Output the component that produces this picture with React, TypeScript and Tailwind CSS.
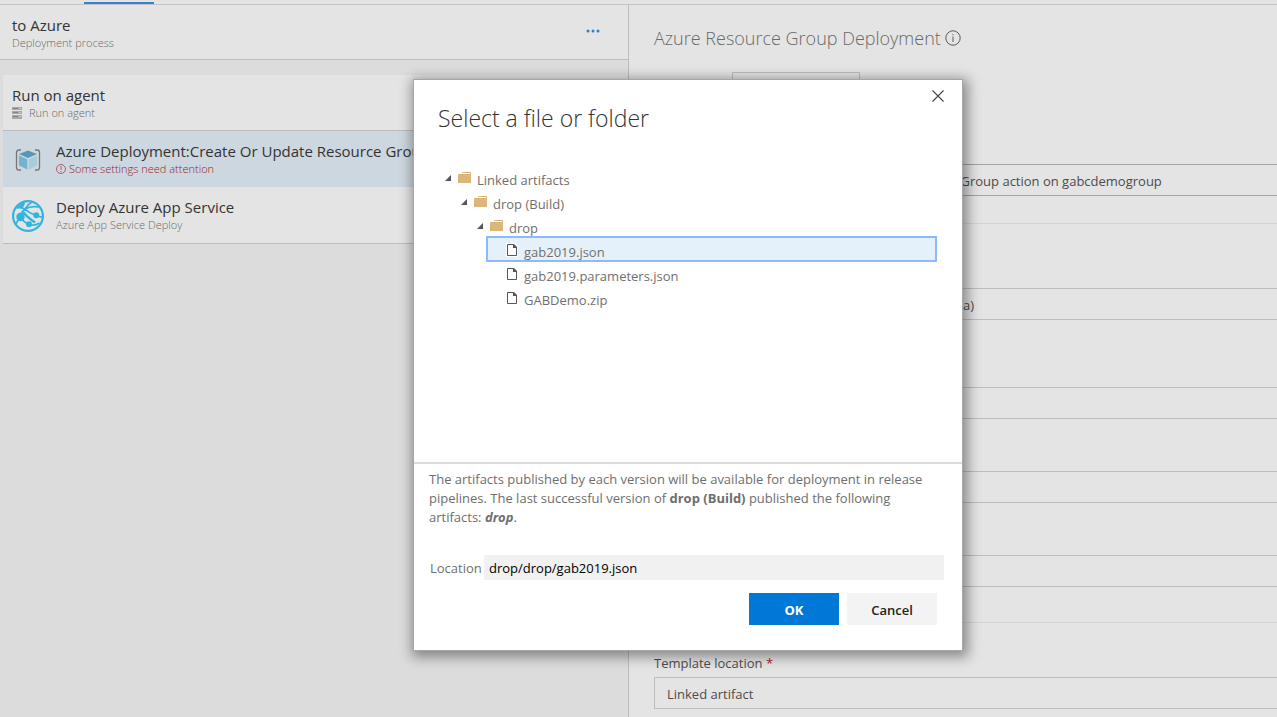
import type { ReactNode } from "react";

const FONT = "font-['Open_Sans','Noto_Sans',sans-serif]";

function FolderIcon() {
  return (
    <svg width="13" height="12" viewBox="0 0 13 12" className="mt-0.5 shrink-0" aria-hidden="true">
      <path d="M0 2h4l1-2h8v11H0z" fill="#dcb67a" />
      <path d="M5 1h7v1H4.500z" fill="#fff" />
    </svg>
  );
}

function FileIcon() {
  return (
    <svg width="12" height="14" viewBox="0 0 12 14" className="mt-0.5 shrink-0" aria-hidden="true">
      <path d="M0 0h8.500l3 3v11H0z" fill="#fff" />
      <path d="M1.500 1.500h6l3 3v8h-9z" fill="#fff" stroke="#555" />
      <path d="M7 1h1l3 3v1H7z" fill="#555" />
    </svg>
  );
}

function Caret() {
  return (
    <svg width="7" height="6" viewBox="0 0 7 6" className="mt-0.5 shrink-0" aria-hidden="true">
      <path d="M6 0v6H0z" fill="#555" />
    </svg>
  );
}

function CubeIcon() {
  return (
    <svg width="26" height="24" viewBox="0 0 26 24" fill="none" className="mt-0.5" aria-hidden="true">
      <path d="M6 2H4Q1.500 2 1.500 4.500v15Q1.500 22 4 22h2M20 2h2q2.500 0 2.500 2.500v15q0 2.500-2.500 2.500h-2" stroke="#777" strokeWidth="1.300" />
      <path d="M13 2.500l9 3.500-9 4-9-4z" fill="#5597b8" />
      <path d="M4 7.500l8.300 3.700V21.500L4 17.500z" fill="#74b2cd" />
      <path d="M22 7.500l-8.300 3.700V21.500l8.300-4z" fill="#a9ccd9" />
    </svg>
  );
}

function GlobeIcon() {
  return (
    <svg width="32" height="32" viewBox="0 0 32 32" fill="none" stroke="#33b4de" className="mt-0.5" aria-hidden="true">
      <circle cx="16" cy="16" r="14.900" strokeWidth="2.200" />
      <path d="M13 9Q8 7 4.500 8M13 9q6-3.500 14-2M13 9q4 4 11 6.500M13 9Q9 12 8.500 17M8.500 17q3 5 8 7.500M16.500 24.500q6 2 11-1.500M24.500 15.500q4 2 6 1M8 18q-3 3-4 6M13 9Q16 4 20 2" strokeWidth="1.700" />
      <path d="M11 12q4 5 12 10.500" strokeWidth="2.400" />
      <path d="M3.500 9Q7 4 12 2.500l1 1-2.500 5-3.500-2z" fill="#33b4de" stroke="none" />
      <circle cx="8.500" cy="17" r="4.200" fill="#33b4de" stroke="none" />
      <circle cx="24.300" cy="15.300" r="3" fill="#33b4de" stroke="none" />
      <circle cx="17" cy="24.300" r="3" fill="#33b4de" stroke="none" />
    </svg>
  );
}

function ServerIcon() {
  return (
    <svg width="11" height="12" viewBox="0 0 11 12" shapeRendering="crispEdges" aria-hidden="true">
      <path d="M0 0h10v3H0zM0 4h10v3H0zM0 8h10v4H0z" fill="#a8a8a8" />
      <path d="M1 1h5v1H1zM1 5h5v1H1zM1 9h5v1H1z" fill="#858585" />
      <path d="M7 1h2v1H7zM7 5h2v1H7zM7 9h2v1H7z" fill="#c9c9c9" />
    </svg>
  );
}

function InfoIcon() {
  return (
    <svg width="16" height="16" viewBox="0 0 16 16" fill="none" stroke="#5a5a5a" aria-hidden="true">
      <circle cx="8" cy="8" r="7.200" />
      <path d="M8 6.500V12M8 4v1.200" />
    </svg>
  );
}

function AlertIcon() {
  return (
    <svg width="10" height="10" viewBox="0 0 10 10" fill="none" stroke="#b8585f" className="shrink-0" aria-hidden="true">
      <circle cx="5" cy="5" r="4.500" />
      <path d="M5 2v4M5 7v1" />
    </svg>
  );
}

function Task({ icon, title, children, selected }: { icon: ReactNode; title: string; children: ReactNode; selected?: boolean }) {
  return (
    <li className={`flex h-14 items-center gap-3 pl-[9px] ${selected ? "bg-[#cdd7df]" : "bg-[#e4e4e4]"}`}>
      <span className="flex w-8 shrink-0 justify-center">{icon}</span>
      <div className="min-w-0 whitespace-nowrap">
        <h3 className="text-[15px] leading-5 text-[#333]">{title}</h3>
        {children}
      </div>
    </li>
  );
}

function PickList({ label, value, className }: { label: string; value: string; className: string }) {
  return (
    <select
      aria-label={label}
      defaultValue={value}
      className={`block h-8 w-full appearance-none border border-r-0 border-[#bcbcbc] pt-[3px] text-[13px] text-[#4c4c4c] ${className}`}
    >
      <option value={value}>{value}</option>
    </select>
  );
}

function TreeRow({ icon, label, level, selected, open }: { icon: ReactNode; label: string; level: string; open?: boolean; selected?: boolean }) {
  return (
    <li
      role="treeitem"
      aria-selected={!!selected}
      className={`flex h-6 items-center gap-1.5 text-[13px] leading-5 text-[#707070] ${level} ${selected ? "bg-[#e5f1fa] outline-2 -outline-offset-1 outline-[#8db8fb]" : ""}`}
    >
      {open && <Caret />}
      {icon}
      <span className="pt-1.5">{label}</span>
    </li>
  );
}

function FileDialog() {
  return (
    <div
      role="dialog"
      aria-labelledby="dialog-title"
      className="absolute top-[79px] left-[413px] flex w-[550px] flex-col border border-[#a6a6a6] bg-white shadow-[2px_3px_12px_3px_rgba(0,0,0,0.4)]"
    >
      <button type="button" aria-label="Close" className="absolute top-2.5 right-[18px]">
        <svg width="12" height="12" viewBox="0 0 12 12" stroke="#444" strokeWidth="1.100" aria-hidden="true">
          <path d="M.500.500l11 11M11.500.500l-11 11" />
        </svg>
      </button>
      <h2 id="dialog-title" className="px-6 pt-5 text-[23px] leading-9 font-light text-[#333]">
        Select a file or folder
      </h2>
      <ul role="tree" aria-label="Artifacts" className="mt-[29px] h-[297px] pr-[26px]">
        <TreeRow level="pl-[31px]" open icon={<FolderIcon />} label="Linked artifacts" />
        <TreeRow level="pl-[47px]" open icon={<FolderIcon />} label="drop (Build)" />
        <TreeRow level="pl-[63px]" open icon={<FolderIcon />} label="drop" />
        <TreeRow level="ml-[73px] pl-[19px]" selected icon={<FileIcon />} label="gab2019.json" />
        <TreeRow level="ml-[73px] pl-[19px]" icon={<FileIcon />} label="gab2019.parameters.json" />
        <TreeRow level="ml-[73px] pl-[19px]" icon={<FileIcon />} label="GABDemo.zip" />
      </ul>
      <p className="border-t-2 border-[#dcdcdc] pt-1.5 pr-[30px] pl-[15px] text-[13px] leading-[19px] text-[#6e6e6e]">
        The artifacts published by each version will be available for deployment in release pipelines. The last
        successful version of <b>drop (Build)</b> published the following artifacts:{" "}
        <b>
          <i>drop</i>
        </b>
        .
      </p>
      <div className="mt-7 flex h-[25px] items-center pr-[18px] pl-4 text-[13px]">
        <label htmlFor="location" className="w-[54px] shrink-0 pt-0.5 text-[#707070]">
          Location
        </label>
        <input id="location" defaultValue="drop/drop/gab2019.json" className="h-full min-w-0 flex-1 bg-[#f1f1f1] px-[5px] text-black" />
      </div>
      <div className="mt-[13px] mb-[25px] flex justify-end gap-2 pr-[25px] text-[13px]">
        <button type="button" className="h-8 w-[90px] bg-[#0078d7] pt-[3px] font-bold text-white">
          OK
        </button>
        <button type="button" className="h-8 w-[90px] bg-[#f3f3f3] pt-[3px] font-semibold text-[#222]">
          Cancel
        </button>
      </div>
    </div>
  );
}

export default function App() {
  return (
    <div className={`relative flex h-screen flex-col overflow-hidden bg-[#e4e4e4] ${FONT}`}>
      <nav aria-label="Sections" className="flex h-[5px] shrink-0 items-end border-b border-[#c4c4c4] pl-[84px]">
        <span className="h-0.5 w-[70px] bg-[#2f85cc]" />
      </nav>
      <div className="flex min-h-0 flex-1">
        <section className="w-[629px] shrink-0 border-r border-[#bcbcbc] bg-[#dcdcdc]">
          <header className="flex h-[55px] items-start justify-between border-b border-[#bcbcbc] bg-[#e4e4e4] pt-2.5 pr-7 pl-3">
            <div>
              <h1 className="text-[15px] leading-5 text-[#333]">to Azure</h1>
              <p className="text-[11px] leading-4 font-light text-[#6a6a6a]">Deployment process</p>
            </div>
            <button type="button" aria-label="More actions" className="mt-3.5">
              <svg width="14" height="4" viewBox="0 0 14 4" fill="#2f7fc4" aria-hidden="true">
                <circle cx="2" cy="2" r="1.500" />
                <circle cx="7" cy="2" r="1.500" />
                <circle cx="12" cy="2" r="1.500" />
              </svg>
            </button>
          </header>
          <div className="mt-[15px] ml-[3px]">
            <div className="h-14 border-b border-[#bcbcbc] bg-[#e4e4e4] pt-2.5 pl-[9px]">
              <h2 className="text-[15px] leading-5 text-[#333]">Run on agent</h2>
              <p className="flex items-center gap-1.5 text-[11px] leading-4 font-light text-[#6a6a6a]">
                <ServerIcon />
                Run on agent
              </p>
            </div>
            <ul className="border-b border-[#bcbcbc]">
              <Task selected icon={<CubeIcon />} title="Azure Deployment:Create Or Update Resource Group action on gabcdemogroup">
                <p className="flex items-center gap-[3px] text-[11px] leading-4 font-light text-[#981b22]">
                  <AlertIcon />
                  Some settings need attention
                </p>
              </Task>
              <Task icon={<GlobeIcon />} title="Deploy Azure App Service">
                <p className="text-[11px] leading-4 font-light text-[#6a6a6a]">Azure App Service Deploy</p>
              </Task>
            </ul>
          </div>
        </section>
        <main className="min-w-0 flex-1 overflow-hidden pt-[19px] pl-[25px]">
          <h2 className="flex items-center gap-1 text-[18px] leading-7 font-light text-[#6a6a6a]">
            Azure Resource Group Deployment
            <InfoIcon />
          </h2>
          <PickList label="Task version" value="2.*" className="mt-5 ml-[78px] max-w-32 border-r! px-3" />
          <input
            aria-label="Display name"
            defaultValue="Azure Deployment:Create Or Update Resource Group action on gabcdemogroup"
            className="mt-[60px] block h-8 w-full border border-r-0 border-[#a2a2a2] px-5 pt-0.5 text-[13px] text-[#4c4c4c]"
          />
          <hr className="mt-[27px] border-[#d4d4d4]" />
          <PickList label="Azure subscription" value="a)" className="mt-16 pl-[308px]" />
          <PickList label="Action" value="" className="mt-[67px] px-3" />
          <PickList label="Resource group" value="" className="mt-[52px] px-3" />
          <PickList label="Location" value="" className="mt-[52px] px-3" />
          <hr className="mt-[35px] border-[#d4d4d4]" />
          <label htmlFor="template-location" className="mt-[30px] block text-[13px] leading-5 text-[#4c4c4c]">
            Template location <span className="text-[#a4262c]">*</span>
          </label>
          <select
            id="template-location"
            className="mt-1 block h-8 w-full appearance-none border border-r-0 border-[#bcbcbc] px-3 pt-[3px] text-[13px] text-[#4c4c4c]"
          >
            <option>Linked artifact</option>
          </select>
        </main>
      </div>
      <FileDialog />
    </div>
  );
}
